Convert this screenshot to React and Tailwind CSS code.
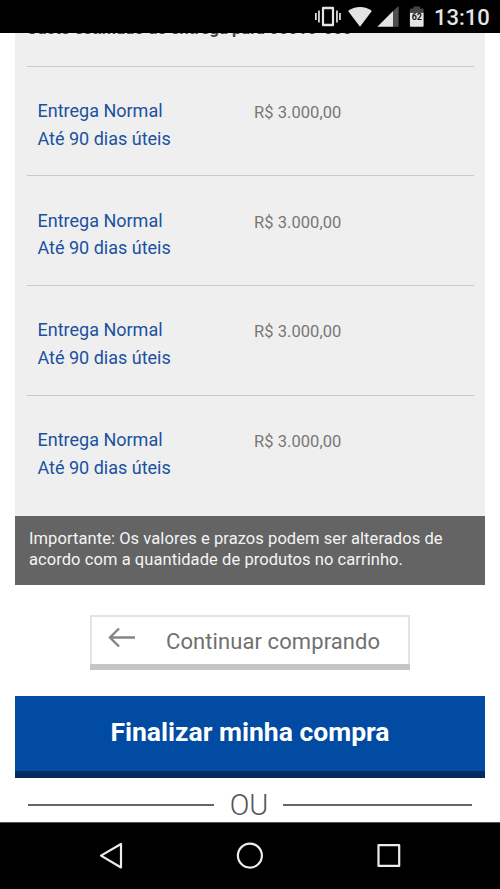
const deliveries = [
  { name: 'Entrega Normal', term: 'Até 90 dias úteis', price: 'R$ 3.000,00' },
  { name: 'Entrega Normal', term: 'Até 90 dias úteis', price: 'R$ 3.000,00' },
  { name: 'Entrega Normal', term: 'Até 90 dias úteis', price: 'R$ 3.000,00' },
  { name: 'Entrega Normal', term: 'Até 90 dias úteis', price: 'R$ 3.000,00' },
];

function StatusBar() {
  return (
    <header className="relative z-10 flex h-[33px] shrink-0 justify-end bg-black pr-[11px]">
      <svg width="112" height="33" viewBox="0 0 112 33" className="mr-[10px]" aria-hidden="true">
        <g transform="translate(2.600 0)">
          <g fill="#e4e4e4">
            <path fillRule="evenodd" d="M8.500 6.800h9.800q1.200 0 1.200 1.200v17q0 1.200-1.200 1.200H8.500q-1.200 0-1.200-1.200V8q0-1.200 1.200-1.200zM9.500 9.200v14.500h7.800V9.200z" />
            <path d="M3.500 10.500h1.700v12H3.500zM.4 13h1.700v7H.4zM21.500 10.500h1.700v12h-1.700zM24.500 13h1.700v7h-1.700z" />
            <path d="M33.500 11C40 5.500 51 5.500 57.200 11L45.400 26.700z" />
            <path d="M62.700 26.800L78.500 11v15.800z" />
            <path d="M95.300 12.500H109v13.200q0 1-1 1H96.300q-1 0-1-1z" />
          </g>
          <path d="M78.500 11L84 6v20.800h-5.500z" fill="#505050" />
          <path d="M95.300 12.700V9.500q0-1 1-1h2.600V6.600h6.600v1.900h2.500q1 0 1 1v3.200z" fill="#444" />
          <text x="102.200" y="19.500" textAnchor="middle" className="font-['Roboto',sans-serif] text-[9px] font-bold" fill="#111">62</text>
        </g>
      </svg>
      <span className="w-[55px] pt-[1px] text-[22px] leading-[33px] font-medium whitespace-nowrap text-[#e4e4e4]">13:10</span>
    </header>
  );
}

function Delivery({ item }) {
  return (
    <div className="flex h-[109.75px] border-t border-[#c9c9c9] pt-[30.250px] pl-[11px]">
      <div className="w-[216.500px] text-[18px] leading-[27.750px] text-[#1b519f]">
        <p>{item.name}</p>
        <p>{item.term}</p>
      </div>
      <p className="pt-[2px] text-[16.500px] leading-[27.750px] tracking-[0.06px] text-[#777]">{item.price}</p>
    </div>
  );
}

export default function App() {
  return (
    <div className="flex h-[889px] w-[500px] flex-col overflow-hidden bg-white font-['Roboto',sans-serif]">
      <StatusBar />
      <main className="flex h-[789px] shrink-0 flex-col px-[15px]">
        <section className="h-[482.500px] shrink-0 bg-[#efefef] px-[11.500px]">
          <div className="flex h-[32.500px] items-start">
            <h2 className="-mt-[15px] text-[16.500px] leading-[22px] font-bold tracking-[0.07px] whitespace-nowrap text-[#444]">
              Custo estimado de entrega para 05010-000
            </h2>
          </div>
          {deliveries.map((item, i) => (
            <Delivery key={i} item={item} />
          ))}
        </section>
        <p className="h-[69px] shrink-0 bg-[#646464] pt-[12.500px] pl-[14px] text-[16.500px] leading-[21px] tracking-[0.07px] whitespace-nowrap text-[#f4f4f4]">
          Importante: Os valores e prazos podem ser alterados de
          <br />
          acordo com a quantidade de produtos no carrinho.
        </p>
        <button className="mt-[30.500px] ml-[75px] flex h-[55px] w-[320px] shrink-0 flex-col border-2 border-b-0 border-[#e4e4e4] bg-white">
          <span className="flex h-[46.500px] items-start pl-[15px] text-[22px] text-[#707070]">
            <svg width="30" height="24" viewBox="0 0 30 24" className="mt-[8px]" fill="none" stroke="#858585" strokeWidth="2.400" aria-hidden="true">
              <path d="M28 12.500H3M12 3.500L3 12.500L12 21.500" />
            </svg>
            <span className="ml-[29px] leading-[49px] tracking-[0.09px] whitespace-nowrap">Continuar comprando</span>
          </span>
          <span className="-mx-[2px] h-[7px] self-stretch bg-[#c5c5c5]" />
        </button>
        <button className="mt-[26px] h-[82px] shrink-0 border-b-[7px] border-[#022b60] bg-[#024ba3] pb-[3px] text-[26.500px] leading-[72px] font-bold whitespace-nowrap text-white">
          Finalizar minha compra
        </button>
        <div className="flex h-[44px] shrink-0 items-center px-[13px]">
          <span className="mb-[-10px] h-[2px] w-[186px] bg-[#666]" />
          <span className="mt-[10px] w-[69px] pl-[1px] text-center text-[29px] leading-[34px] font-light text-[#555]">OU</span>
          <span className="mb-[-10px] h-[2px] w-[189px] bg-[#666]" />
        </div>
      </main>
      <nav className="relative z-10 h-[67px] shrink-0 border-t border-[#555] bg-black">
        <svg width="500" height="66" viewBox="0 823 500 66" fill="none" stroke="#ececec" strokeWidth="2.200" strokeLinejoin="round" aria-label="Navegação">
          <path d="M101 855.600L121 844V867.500z" />
          <circle cx="249.900" cy="855.600" r="12" />
          <rect x="378.500" y="845.200" width="20.700" height="20.700" />
        </svg>
      </nav>
    </div>
  );
}
